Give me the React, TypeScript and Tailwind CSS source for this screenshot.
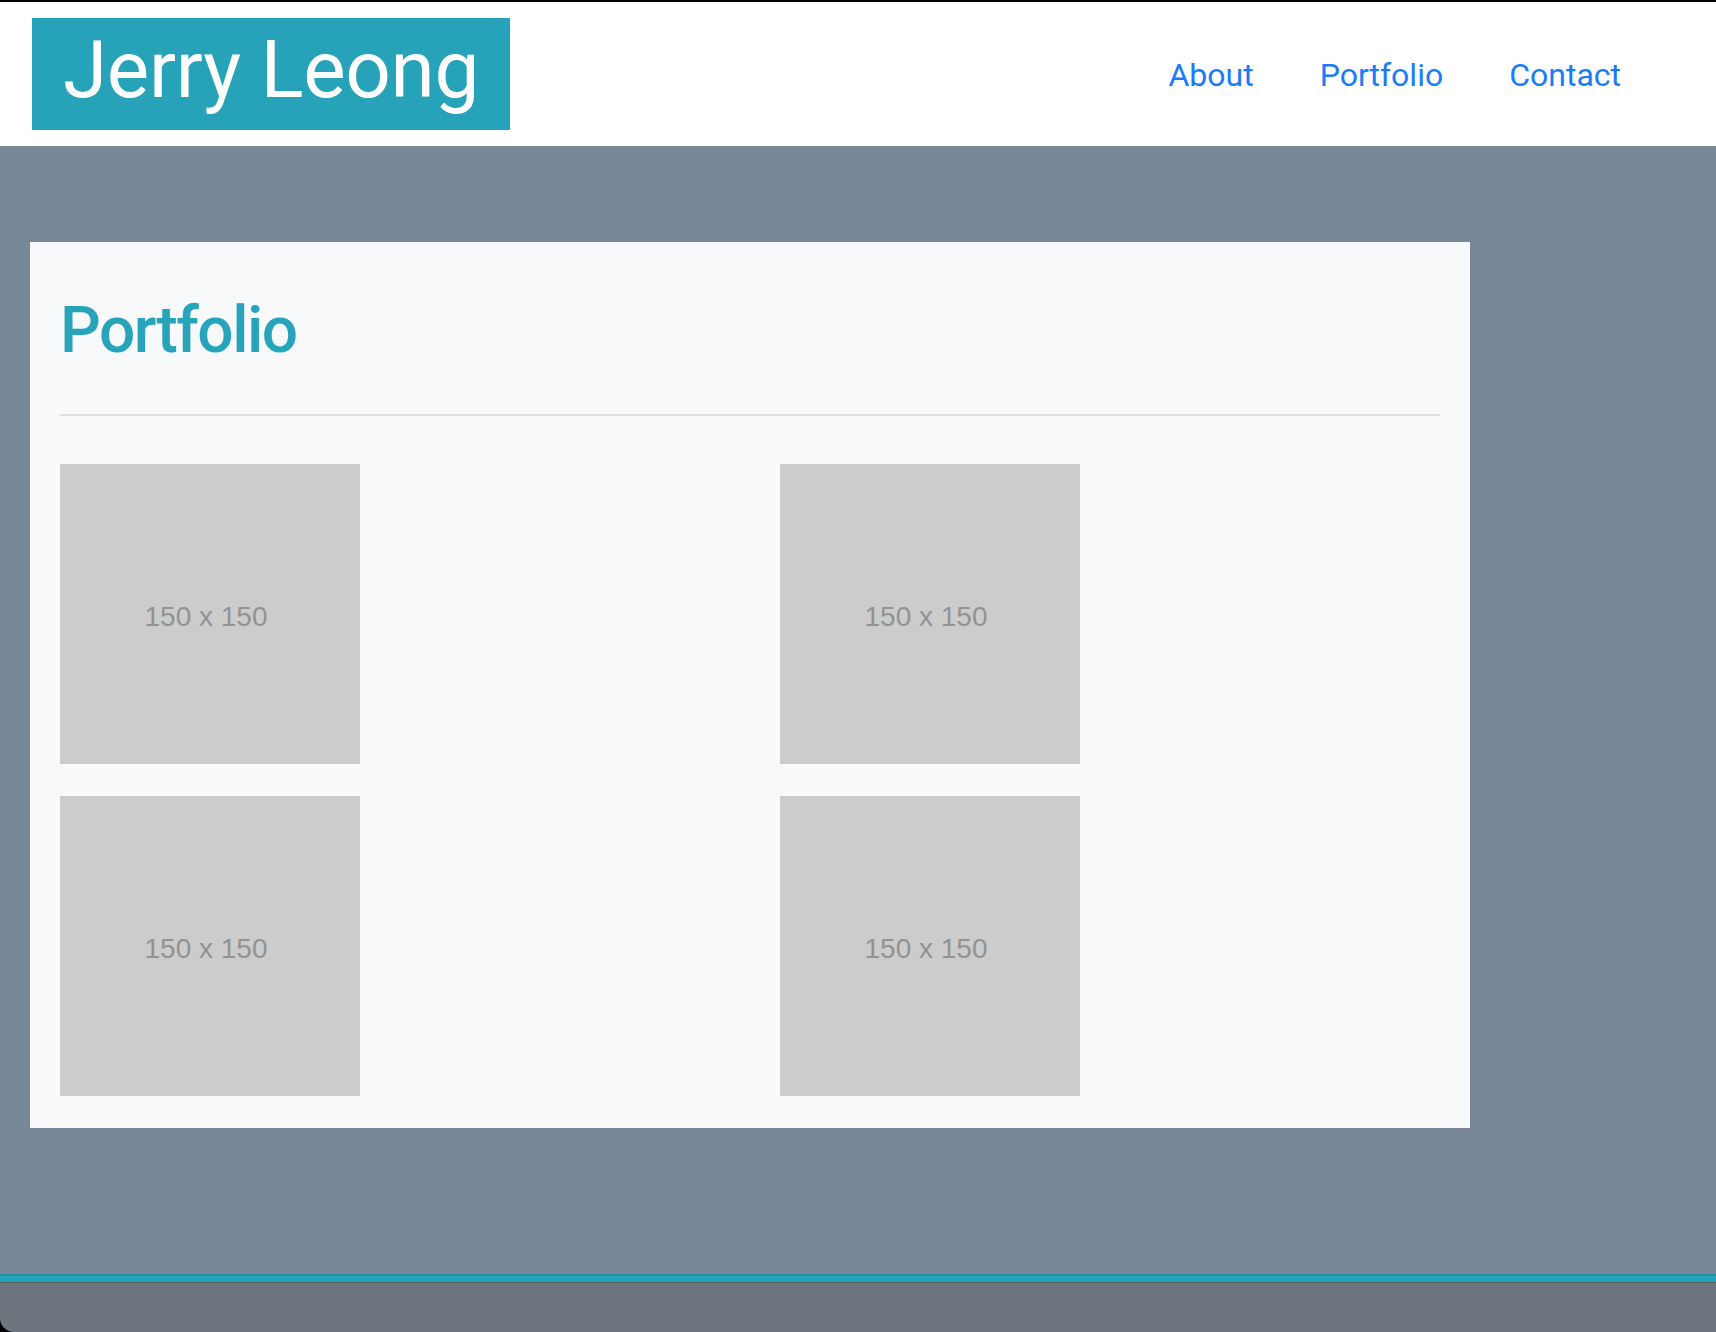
const tiles = ["a", "b", "c", "d"];

export default function App() {
  return (
    <div className="flex min-h-[1332px] flex-col bg-black pt-[2px] font-['Roboto','Noto_Sans',sans-serif]">
      <header className="flex h-[144px] items-center justify-between bg-white pl-[32px] pr-[95px]">
        <div className="flex h-[112px] items-center bg-[#26a3b9] px-[31px] pb-[8px]">
          <span className="text-[80px] leading-none tracking-[-0.3px] text-white">Jerry Leong</span>
        </div>
        <nav className="flex gap-[66px] pt-[2px] text-[32px] text-[#1a7cf6]">
          <a href="#">About</a>
          <a href="#">Portfolio</a>
          <a href="#">Contact</a>
        </nav>
      </header>

      <main className="flex-1 bg-[#788898] pt-[96px] pb-[146px] pl-[30px]">
        <section className="w-[1440px] bg-[#f8f9fa] px-[30px] pt-[51px] pb-[32px]">
          <h2 className="text-[64px] font-medium leading-[1.2] tracking-[-1.5px] text-[#27a4b9]">Portfolio</h2>
          <hr className="mt-[44px] border-t-2 border-[#dedfe1]" />
          <div className="mt-[48px] grid grid-cols-[720px_1fr] gap-y-[32px]">
            {tiles.map((t) => (
              <div
                key={t}
                className="flex h-[300px] w-[300px] items-center justify-center bg-[#cccccc] pt-[6px] pr-[8px] font-['Liberation_Sans',sans-serif] text-[28px] text-[#939393]"
              >
                150 x 150
              </div>
            ))}
          </div>
        </section>
      </main>

      <footer className="flex h-[58px] flex-col overflow-hidden rounded-bl-[14px] bg-[#6c757d]">
        <div className="h-[2px] bg-[#1f8fa3]" />
        <div className="h-[6px] bg-[#25a3b9]" />
        <div className="h-[1px] bg-[#5c646b]" />
      </footer>
    </div>
  );
}
